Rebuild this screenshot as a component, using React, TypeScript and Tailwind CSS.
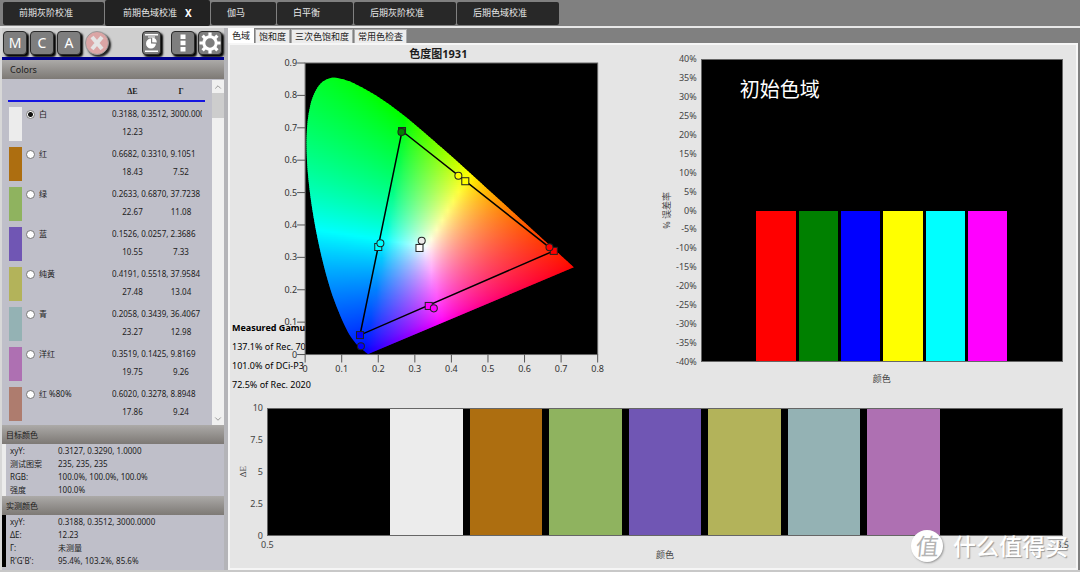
import type { ReactNode } from "react";
import { ChevronDown, ChevronUp } from "lucide-react";

type ColorRow = {
  name: string;
  swatch: string;
  xyY: string;
  deltaE: string;
  gamma?: string;
};

const pages = [
  { label: "前期灰阶校准", width: "w-[101px]" },
  { label: "前期色域校准", width: "w-[105px]", active: true },
  { label: "伽马", width: "w-[65px]" },
  { label: "白平衡", width: "w-[76px]" },
  { label: "后期灰阶校准", width: "w-[102px]" },
  { label: "后期色域校准", width: "w-[102px]" }
];

const views = ["色域", "饱和度", "三次色饱和度", "常用色检查"];

const colors: ColorRow[] = [
  { name: "白", swatch: "bg-[#ececec]", xyY: "0.3188, 0.3512, 3000.0000", deltaE: "12.23" },
  { name: "红", swatch: "bg-[#ad6e10]", xyY: "0.6682, 0.3310, 9.1051", deltaE: "18.43", gamma: "7.52" },
  { name: "绿", swatch: "bg-[#8fb35f]", xyY: "0.2633, 0.6870, 37.7238", deltaE: "22.67", gamma: "11.08" },
  { name: "蓝", swatch: "bg-[#7056b4]", xyY: "0.1526, 0.0257, 2.3686", deltaE: "10.55", gamma: "7.33" },
  { name: "纯黄", swatch: "bg-[#b3b35a]", xyY: "0.4191, 0.5518, 37.9584", deltaE: "27.48", gamma: "13.04" },
  { name: "青", swatch: "bg-[#94b2b4]", xyY: "0.2058, 0.3439, 36.4067", deltaE: "23.27", gamma: "12.98" },
  { name: "洋红", swatch: "bg-[#ae70b2]", xyY: "0.3519, 0.1425, 9.8169", deltaE: "19.75", gamma: "9.26" },
  { name: "红 %80%", swatch: "bg-[#ae7c6e]", xyY: "0.6020, 0.3278, 8.8948", deltaE: "17.86", gamma: "9.24" }
];

const target = [
  ["xyY:", "0.3127, 0.3290, 1.0000"],
  ["测试图案", "235, 235, 235"],
  ["RGB:", "100.0%, 100.0%, 100.0%"],
  ["强度", "100.0%"]
];

const measured = [
  ["xyY:", "0.3188, 0.3512, 3000.0000"],
  ["ΔE:", "12.23"],
  ["Γ:", "未测量"],
  ["R'G'B':", "95.4%, 103.2%, 85.6%"]
];

const errorTicks = [40, 35, 30, 25, 20, 15, 10, 5, 0, -5, -10, -15, -20, -25, -30, -35, -40];
const errorBars = ["bg-[#ff0000]", "bg-[#008000]", "bg-[#0000ff]", "bg-[#ffff00]", "bg-[#00ffff]", "bg-[#ff00ff]"];

// spectral locus, CIE 1931 2° observer
const locus = [
  [0.1741, 0.005], [0.1714, 0.0051], [0.1644, 0.0109], [0.1566, 0.0177], [0.144, 0.0297],
  [0.1241, 0.0578], [0.1096, 0.0868], [0.0913, 0.1327], [0.0687, 0.2007], [0.0454, 0.295],
  [0.0235, 0.4127], [0.0082, 0.5384], [0.0039, 0.6548], [0.0139, 0.7502], [0.0389, 0.812],
  [0.0743, 0.8338], [0.1142, 0.8262], [0.1547, 0.8059], [0.1929, 0.7816], [0.2296, 0.7543],
  [0.2658, 0.7243], [0.3016, 0.6923], [0.3731, 0.6245], [0.4441, 0.5547], [0.5125, 0.4866],
  [0.5752, 0.4242], [0.627, 0.3725], [0.6658, 0.334], [0.6915, 0.3083], [0.7347, 0.2653]
];

const gamutTargets = [
  { x: 0.265, y: 0.69, fill: "#008000" },
  { x: 0.438, y: 0.535, fill: "#ffff00" },
  { x: 0.68, y: 0.32, fill: "#ff0000" },
  { x: 0.338, y: 0.15, fill: "#ff00ff" },
  { x: 0.15, y: 0.06, fill: "#0000ff" },
  { x: 0.2, y: 0.332, fill: "#00ffff" },
  { x: 0.3127, y: 0.329, fill: "#ffffff" }
];

const gamutReadings = [
  { x: 0.2633, y: 0.687, fill: "#008000" },
  { x: 0.4191, y: 0.5518, fill: "#ffff00" },
  { x: 0.6682, y: 0.331, fill: "#ff0000" },
  { x: 0.3519, y: 0.1425, fill: "#ff00ff" },
  { x: 0.1526, y: 0.0257, fill: "#0000ff" },
  { x: 0.2058, y: 0.3439, fill: "#00ffff" },
  { x: 0.3188, y: 0.3512, fill: "#ececec" }
];

const plot = { left: 75, top: 3, right: 367, bottom: 294 };
const toX = (x: number) => plot.left + (x / 0.8) * (plot.right - plot.left);
const toY = (y: number) => plot.bottom - (y / 0.9) * (plot.bottom - plot.top);

function locusPath() {
  const pts = locus.map(([x, y]) => [toX(x), toY(y * 1.028 - 0.003)]);
  let d = `M${pts[0][0]} ${pts[0][1]}`;
  for (let i = 0; i < pts.length - 1; i++) {
    const p0 = pts[Math.max(i - 1, 0)];
    const p1 = pts[i];
    const p2 = pts[i + 1];
    const p3 = pts[Math.min(i + 2, pts.length - 1)];
    const c1 = [p1[0] + (p2[0] - p0[0]) / 6, p1[1] + (p2[1] - p0[1]) / 6];
    const c2 = [p2[0] - (p3[0] - p1[0]) / 6, p2[1] - (p3[1] - p1[1]) / 6];
    d += ` C${c1[0].toFixed(2)} ${c1[1].toFixed(2)} ${c2[0].toFixed(2)} ${c2[1].toFixed(2)} ${p2[0].toFixed(2)} ${p2[1].toFixed(2)}`;
  }
  return d + " Z";
}

// xy -> CIE RGB, scaled so the strongest channel is full
function xyToColor(x: number, y: number) {
  const z = 1 - x - y;
  const rgb = [
    2.3647 * x - 0.8966 * y - 0.4681 * z,
    -0.5152 * x + 1.4264 * y + 0.0888 * z,
    0.0052 * x - 0.0144 * y + 1.0092 * z
  ].map((c) => Math.max(c, 0));
  const max = Math.max(...rgb);
  const [r, g, b] = rgb.map((c) => Math.round(255 * Math.pow(c / max, 1 / 1.35)));
  return `rgb(${r},${g},${b})`;
}

const STRIP = 2;
const strips = Array.from({ length: Math.ceil((plot.bottom - plot.top) / STRIP) }, (_, i) => {
  const top = plot.top + i * STRIP;
  const y = ((plot.bottom - top - STRIP / 2) / (plot.bottom - plot.top)) * 0.9;
  const stops = Array.from({ length: 51 }, (_, k) => ({
    offset: k / 50,
    color: xyToColor((k / 50) * 0.75, y)
  }));
  return { top, stops };
});

function ChromaticityChart() {
  return (
    <svg viewBox="0 0 380 320" className="relative z-10 block w-full overflow-visible" role="img" aria-label="色度图1931">
      <defs>
        <clipPath id="locus">
          <path d={locusPath()} />
        </clipPath>
        {strips.map((s, i) => (
          <linearGradient key={i} id={`strip${i}`} gradientUnits="userSpaceOnUse" x1={toX(0)} x2={toX(0.75)} y1="0" y2="0">
            {s.stops.map((stop) => (
              <stop key={stop.offset} offset={stop.offset} stopColor={stop.color} />
            ))}
          </linearGradient>
        ))}
      </defs>
      <rect x="75" y="3" width="292" height="291" fill="#000" stroke="#666" />
      <g clipPath="url(#locus)">
        {strips.map((s, i) => (
          <rect key={i} x={toX(0)} y={s.top} width={toX(0.75) - toX(0)} height={STRIP + 1} fill={`url(#strip${i})`} />
        ))}
      </g>
      <g stroke="#555" strokeWidth="1">
        {Array.from({ length: 10 }, (_, i) => (
          <line key={i} x1="67" x2="75" y1={toY(i / 10)} y2={toY(i / 10)} />
        ))}
        {Array.from({ length: 9 }, (_, i) => (
          <line key={i} x1={toX(i / 10)} x2={toX(i / 10)} y1="294" y2="302" />
        ))}
      </g>
      <g fill="#333" fontSize="9">
        {Array.from({ length: 10 }, (_, i) => (
          <text key={i} x="67" y={toY(i / 10) + 3} textAnchor="end">
            {i / 10}
          </text>
        ))}
        {Array.from({ length: 9 }, (_, i) => (
          <text key={i} x={toX(i / 10)} y="311" textAnchor="middle">
            {i / 10}
          </text>
        ))}
      </g>
      <polygon
        points={[[0.265, 0.69], [0.68, 0.32], [0.15, 0.06]].map(([x, y]) => `${toX(x)},${toY(y)}`).join(" ")}
        fill="none"
        stroke="#000"
        strokeWidth="1.5"
      />
      {gamutTargets.map((t) => (
        <rect key={t.fill} x={toX(t.x) - 3.5} y={toY(t.y) - 3.5} width="7" height="7" fill={t.fill} stroke="#222" />
      ))}
      {gamutReadings.map((m) => (
        <circle key={m.fill} cx={toX(m.x)} cy={toY(m.y)} r="3.5" fill={m.fill} stroke="#222" />
      ))}
    </svg>
  );
}

function VerticalLabel({ children }: { children: ReactNode }) {
  return (
    <div className="flex w-3 items-center justify-center">
      <span className="rotate-180 whitespace-nowrap leading-3 [text-orientation:sideways] [writing-mode:vertical-rl]">
        {children}
      </span>
    </div>
  );
}

function ErrorChart() {
  return (
    <div className="flex min-w-0 flex-1 flex-col pt-[14px] pr-[13px] pl-[50px] text-[9px] text-[#444]">
      <div className="flex h-[303px]">
        <VerticalLabel>% 误差率</VerticalLabel>
        <div className="-my-1.5 flex w-6 flex-col justify-between text-right leading-3">
          {errorTicks.map((t) => (
            <span key={t}>{t}%</span>
          ))}
        </div>
        <div className="relative ml-1 flex min-w-0 flex-1 items-end gap-[3px] border border-[#666] bg-black px-[13.6%]">
          <p className="absolute top-4 left-[38px] text-[20px] leading-7 text-white">初始色域</p>
          {errorBars.map((bar) => (
            <div key={bar} className={`h-1/2 flex-1 ${bar}`} />
          ))}
        </div>
      </div>
      <p className="mt-3 ml-10 text-center leading-[10px]">颜色</p>
    </div>
  );
}

function DeltaChart() {
  return (
    <div className="pt-6 pr-[13px] pl-[7px] text-[9px] text-[#444]">
      <div className="flex h-32">
        <VerticalLabel>
          <span className="font-['Liberation_Serif',serif]">ΔE</span>
        </VerticalLabel>
        <div className="-my-1.5 flex w-[14px] flex-col justify-between text-right leading-3">
          {["10", "7.5", "5", "2.5", "0"].map((t) => (
            <span key={t}>{t}</span>
          ))}
        </div>
        <div className="ml-1 flex min-w-0 flex-1 gap-[7px] border border-[#666] bg-black px-[14.8%]">
          {colors.slice(0, 7).map((c) => (
            <div key={c.name} className={`flex-1 ${c.swatch}`} />
          ))}
        </div>
      </div>
      <div className="-mr-1.5 ml-6 flex justify-between pt-1 leading-[10px]">
        <span>0.5</span>
        <span>8.5</span>
      </div>
      <p className="ml-[30px] text-center leading-[10px]">颜色</p>
    </div>
  );
}

function ToolButton({ label, children, className = "w-6" }: { label: string; children: ReactNode; className?: string }) {
  return (
    <button
      aria-label={label}
      className={`flex h-6 items-center justify-center rounded-[4px] border border-[#2a2a2a] bg-[#7e7e7e] text-[14px] leading-none text-white shadow-[2px_2px_2px_#000] ${className}`}
    >
      {children}
    </button>
  );
}

function Toolbar() {
  return (
    <div className="flex h-[29px] items-center gap-[3px] bg-[#cfcfcf] pr-0.5 pl-px">
      <ToolButton label="M">M</ToolButton>
      <ToolButton label="C">C</ToolButton>
      <ToolButton label="A">A</ToolButton>
      <button
        aria-label="停止"
        className="ml-px flex size-6 items-center justify-center rounded-full border border-[#999] bg-[#dba5a5] shadow-[2px_2px_2px_#222]"
      >
        <svg viewBox="0 0 16 16" className="size-4" stroke="#e4e4e4" strokeWidth="4">
          <path d="M3 2 L13 14 M13 2 L3 14" />
        </svg>
      </button>
      <div className="ml-auto flex gap-[3px]">
        <ToolButton label="报告" className="mr-[7px] w-[19px]">
          <svg viewBox="0 0 15 20" className="h-5 w-[15px] shrink-0" fill="#fff">
            <rect x="1" y="1" width="13" height="1.5" />
            <rect x="1" y="17.5" width="13" height="1.5" />
            <rect x="4" y="3.5" width="7" height="1" />
            <path d="M7 5.5 A5 5 0 1 0 12 10.8 L7 10.5 Z" />
            <path d="M8.2 4.5 A5 5 0 0 1 12.8 9.4 L8.2 9.3 Z" />
          </svg>
        </ToolButton>
        <ToolButton label="更多">
          <svg viewBox="0 0 6 18" className="h-[18px] w-1.5" fill="#fff">
            <rect x="0.5" y="0.5" width="5" height="4.5" />
            <rect x="0.5" y="6.7" width="5" height="4.5" />
            <rect x="0.5" y="13" width="5" height="4.5" />
          </svg>
        </ToolButton>
        <ToolButton label="设置">
          <svg viewBox="-11 -11 22 22" className="size-[22px] shrink-0" fill="none" stroke="#fff">
            <circle r="6.2" strokeWidth="3" />
            {[0, 45, 90, 135].map((a) => (
              <path key={a} transform={`rotate(${a})`} d="M0 -10.5 V-7 M0 7 V10.5" strokeWidth="3.2" />
            ))}
          </svg>
        </ToolButton>
      </div>
    </div>
  );
}

function SectionTitle({ children }: { children: ReactNode }) {
  return (
    <h2 className="h-[19px] bg-linear-to-b from-[#acaaa8] to-[#7d7975] pl-1 text-[8px] leading-5 text-[#1a1a1a]">
      {children}
    </h2>
  );
}

function ColorTable() {
  return (
    <div className="flex h-[346px] shrink-0 justify-between bg-[#bfbfc9] pl-1.5">
      <table className="w-[197px] table-fixed self-start text-[8px]">
        <colgroup>
          <col className="w-4" />
          <col className="w-[84px]" />
          <col className="w-[49px]" />
          <col className="w-12" />
        </colgroup>
        <thead className="font-['Liberation_Serif',serif]">
          <tr className="h-[22px] border-b-2 border-[#1414e0]">
            <th />
            <th />
            <th className="pt-1 leading-3">ΔE</th>
            <th className="pt-1 leading-3">Γ</th>
          </tr>
        </thead>
        {colors.map((c, i) => (
          <tbody key={c.name}>
            <tr className="h-5 align-top">
              <td rowSpan={2} className="pl-px">
                <div className={`mt-[5px] h-[34px] w-[13px] ${c.swatch}`} />
              </td>
              <td rowSpan={2}>
                <label className="flex items-center gap-1 pt-1 pl-0.5 leading-4">
                  <input
                    type="radio"
                    name="color"
                    defaultChecked={i === 0}
                    className="size-[9px] appearance-none rounded-full border border-[#777] bg-white checked:bg-[radial-gradient(circle,#111_0_2px,#fff_3px)]"
                  />
                  {c.name}
                </label>
              </td>
              <td colSpan={2} className="pt-1 pr-[3px] pl-1">
                <div className="overflow-hidden whitespace-nowrap leading-4">{c.xyY}</div>
              </td>
            </tr>
            <tr className="h-5 text-center leading-5">
              <td>{c.deltaE}</td>
              <td>{c.gamma}</td>
            </tr>
          </tbody>
        ))}
      </table>
      <div className="mt-px flex w-3 flex-col bg-[#f0f0f0] text-[#888]">
        <button aria-label="向上" className="flex h-[13px] items-center justify-center">
          <ChevronUp className="size-2.5" />
        </button>
        <div className="h-[25px] bg-[#cdcdcd]" />
        <button aria-label="向下" className="mt-auto flex h-[13px] items-center justify-center">
          <ChevronDown className="size-2.5" />
        </button>
      </div>
    </div>
  );
}

function Readout({ rows, strip }: { rows: string[][]; strip: string }) {
  return (
    <div className="flex bg-[#bfbfc9]">
      <div className={`w-1 ${strip}`} />
      <dl className="pl-1">
        {rows.map(([label, value]) => (
          <div key={label} className="flex text-[8px] leading-[13px]">
            <dt className="w-12">{label}</dt>
            <dd>{value}</dd>
          </div>
        ))}
      </dl>
    </div>
  );
}

function Sidebar() {
  return (
    <aside className="flex w-[228px] shrink-0 flex-col border-r-4 border-l-2 border-r-[#b4b4b8] border-l-[#d8d8d8] bg-[#bfbfc9]">
      <Toolbar />
      <div className="h-[3px] bg-[#00008b]" />
      <h2 className="h-[19px] bg-linear-to-b from-[#acaaa8] to-[#7d7975] pl-2 text-[9px] leading-[19px]">Colors</h2>
      <ColorTable />
      <SectionTitle>目标颜色</SectionTitle>
      <Readout rows={target} strip="bg-[#ececec]" />
      <SectionTitle>实测颜色</SectionTitle>
      <Readout rows={measured} strip="bg-black" />
    </aside>
  );
}

function Watermark() {
  return (
    <div className="absolute right-3 bottom-2 z-20 flex items-center gap-2.5 text-white">
      <span className="flex size-8 items-center justify-center rounded-full bg-white text-[23px] leading-none text-[#b4b4b4] shadow-[1px_1px_2px_#999]">
        <span className="-skew-x-6">值</span>
      </span>
      <span className="text-[23px] leading-8 font-medium [text-shadow:1px_1px_1px_#999]">什么值得买</span>
    </div>
  );
}

export default function App() {
  return (
    <div className="flex min-h-screen flex-col bg-[#808080] font-['Noto_Sans','Noto_Sans_CJK_SC',sans-serif] text-[#1c1c1c]">
      <nav className="flex h-[26px] items-center gap-px pl-[3px] text-[9px] text-[#e6e6e6]">
        {pages.map((p) => (
          <button
            key={p.label}
            className={`flex items-center rounded-[2px] ${p.width} ${p.active ? "h-[26px] bg-[#222] pl-[18px]" : "h-[23px] bg-[#282828] pl-4"}`}
          >
            {p.label}
            {p.active ? <span className="ml-2 text-[10px] font-bold text-white">X</span> : null}
          </button>
        ))}
      </nav>
      <div className="flex flex-1 border-t-2 border-b-2 border-t-[#e8e8e8] border-b-[#c8c8c8]">
        <Sidebar />
        <main className="relative flex min-w-0 flex-1 flex-col pr-0.5">
          <div className="flex h-[15px] items-end gap-px text-[9px] leading-3">
            {views.map((v, i) => (
              <button
                key={v}
                className={
                  i === 0
                    ? "h-[15px] bg-white px-1"
                    : "h-[14px] border border-[#aaa] border-b-0 bg-[#ececec] px-[3px]"
                }
              >
                {v}
              </button>
            ))}
          </div>
          <div className="flex-1 border-2 border-[#f6f6f6] bg-[#e5e5e5]">
            <section className="flex">
              <div className="relative w-[45%] shrink-0">
                <h1 className="pt-0.5 pl-9 text-center text-[11px] leading-[13px] font-bold">色度图1931</h1>
                <div className="absolute top-[273px] left-0.5 text-[9px] leading-[19px] whitespace-nowrap text-black">
                  <p className="font-bold">Measured Gamut</p>
                  <p>137.1% of Rec. 709</p>
                  <p>101.0% of DCi-P3</p>
                  <p>72.5% of Rec. 2020</p>
                </div>
                <ChromaticityChart />
              </div>
              <ErrorChart />
            </section>
            <DeltaChart />
          </div>
          <Watermark />
        </main>
      </div>
    </div>
  );
}
